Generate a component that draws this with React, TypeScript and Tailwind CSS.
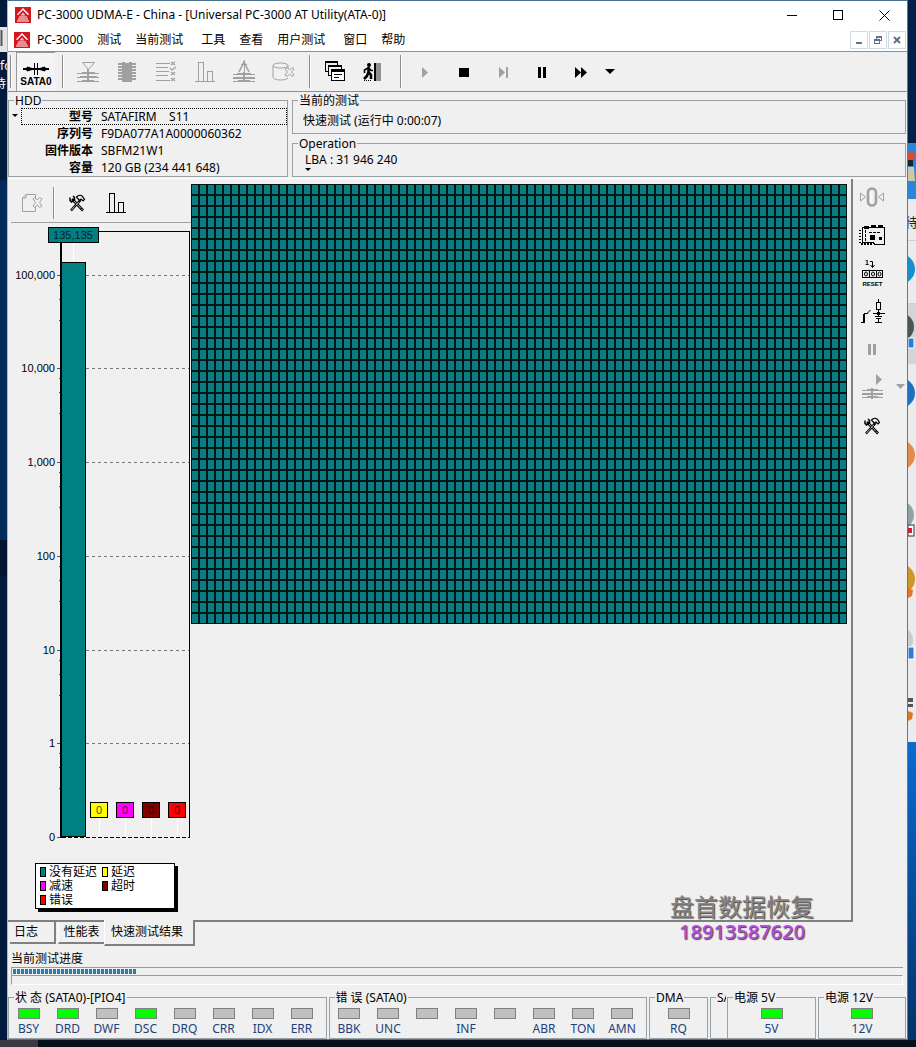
import type { ReactNode } from 'react';
import clsx from 'clsx';

const MENU = [
  { label: 'PC-3000' },
  { label: '测试' },
  { label: '当前测试', wide: true },
  { label: '工具' },
  { label: '查看' },
  { label: '用户测试', wide: true },
  { label: '窗口' },
  { label: '帮助' },
];

const DRIVE = [
  { label: '型号', value: 'SATAFIRM    S11' },
  { label: '序列号', value: 'F9DA077A1A0000060362' },
  { label: '固件版本', value: 'SBFM21W1' },
  { label: '容量', value: '120 GB (234 441 648)' },
];

const STATUS = [
  { label: 'BSY', on: true },
  { label: 'DRD', on: true },
  { label: 'DWF', on: false },
  { label: 'DSC', on: true },
  { label: 'DRQ', on: false },
  { label: 'CRR', on: false },
  { label: 'IDX', on: false },
  { label: 'ERR', on: false },
];

const ERRORS = ['BBK', 'UNC', '', 'INF', '', 'ABR', 'TON', 'AMN'];

const AXIS = [
  { label: '100,000', y: 275 },
  { label: '10,000', y: 368 },
  { label: '1,000', y: 462 },
  { label: '100', y: 556 },
  { label: '10', y: 650 },
  { label: '1', y: 743 },
];

const ZEROS = [
  { x: 90, fill: '#ffff00' },
  { x: 116, fill: '#ff00ff' },
  { x: 142, fill: '#800000' },
  { x: 168, fill: '#ff0000' },
];

const LEGEND = [
  { label: '没有延迟', color: 'bg-[#008080]' },
  { label: '延迟', color: 'bg-[#ffff00]' },
  { label: '减速', color: 'bg-[#ff00ff]' },
  { label: '超时', color: 'bg-[#800000]' },
  { label: '错误', color: 'bg-[#ff0000]' },
];

function Icon({ children, className }: { children: ReactNode; className?: string }) {
  return (
    <svg
      width="28"
      height="28"
      viewBox="0 0 28 28"
      fill="none"
      stroke="currentColor"
      strokeWidth="1"
      shapeRendering="crispEdges"
      aria-hidden="true"
      className={className}
    >
      {children}
    </svg>
  );
}

function LogoIcon() {
  return (
    <svg width="16" height="16" viewBox="0 0 16 16" aria-hidden="true" className="shrink-0">
      <rect width="16" height="16" fill="#d31820" />
      <path d="M2.500 7.800 8 2l5.500 5.800" fill="none" stroke="#fff" strokeWidth="1.300" />
      <path d="M8 5.500 5.500 8.600h5z" fill="#f6c4c6" />
      <path d="M4 10h8M3 12h10M2 14h12" stroke="#fff" strokeWidth="1.100" />
    </svg>
  );
}

function TransformerDownIcon() {
  return (
    <Icon>
      <path d="M8.500 4.500h12l-6 7z" shapeRendering="auto" />
      <path d="M14 11v13M3 15h22M3 19h22M3 23h22" strokeWidth="2" />
      <path d="M3 14.500h5M21 14.500h4M3 18.500h3M23 18.500h2M3 22.500h5M20 22.500h5" stroke="#f0f0f0" />
    </Icon>
  );
}

function ChipIcon() {
  return (
    <Icon>
      <rect x="9" y="4" width="10" height="20" fill="currentColor" stroke="none" />
      <path d="M7 5v18M21 5v18" strokeWidth="4" strokeDasharray="2 1" />
      <path d="M12 4.500h4" stroke="#f0f0f0" />
    </Icon>
  );
}

function CheckListIcon() {
  return (
    <Icon>
      <path d="M4 5.500h14M4 9.500h12M4 13.500h13M4 17.500h12M4 22.500h14" />
      <path
        d="m19 4 4 3m0-3-4 3M18 10l2 2 4-3M19 14l4 3m0-3-4 3M19 20l4 3m0-3-4 3"
        shapeRendering="auto"
        strokeWidth="1.200"
      />
    </Icon>
  );
}

function BarsIcon() {
  return (
    <Icon>
      <path d="M4 23.500h20M7.500 23V4.500h5V23M16.500 23v-9.500h5V23" />
    </Icon>
  );
}

function TransformerUpIcon() {
  return (
    <Icon>
      <path d="M9 14 14 4l5 10" shapeRendering="auto" strokeWidth="1.500" />
      <path d="M11 6.500h6M14.500 2v12" />
      <path d="M14 14v10M3 16h22M3 19.500h22M3 23h22" strokeWidth="2" />
      <path d="M3 15.500h4M21 15.500h4M3 22.500h5M20 22.500h5" stroke="#f0f0f0" />
    </Icon>
  );
}

function CylinderIcon() {
  return (
    <Icon>
      <g shapeRendering="auto">
        <ellipse cx="11.500" cy="7.500" rx="7.500" ry="2.500" />
        <path d="M4 7.500V19c0 1.500 3 3 7.500 3s6-.8 7.500-2M19 7.500V11" />
        <path d="m16 11 2-1.500 2.500 2.500 2.500-2.500 2 1.500-2.500 3 2.500 3-2 1.500-2.500-2.500-2.500 2.500-2-1.500 2.500-3z" />
      </g>
    </Icon>
  );
}

function WindowsIcon() {
  return (
    <Icon className="text-black">
      <path d="M4.500 3.500h12v10h-12z" fill="#f0f0f0" />
      <path d="M4 4h13" strokeWidth="2" />
      <path d="M7.500 7.500h13v10h-13z" fill="#f0f0f0" />
      <path d="M7 8h14" strokeWidth="2" />
      <path d="M10.500 11.500h13v11h-13z" fill="#fff" />
      <path d="M10 13h14" strokeWidth="2" />
      <path d="M13 16.500h8M13 19.500h5" />
    </Icon>
  );
}

function ExitIcon() {
  return (
    <Icon className="text-black">
      <rect x="14" y="5" width="2" height="18" fill="#000" stroke="none" />
      <rect x="16" y="5" width="5" height="18" fill="#909090" stroke="none" />
      <g shapeRendering="auto">
        <circle cx="9" cy="7" r="2" fill="#000" stroke="none" />
        <path d="M8.500 9v6M8.500 14l2.500 3v4M8.500 14 7 18l-3 3" strokeWidth="2.600" />
        <path d="m8 10-3.500 2v3M9 10l2 2.500h2" strokeWidth="1.600" />
      </g>
      <path d="M4 22.500h8" strokeDasharray="1 1" />
    </Icon>
  );
}

function ToolsIcon() {
  return (
    <Icon className="text-black">
      <g shapeRendering="auto">
        <path d="m9 10 11 11.500M8 21.500 17.500 11" strokeWidth="2.600" />
        <path d="m10 11 9.500 10M8.500 21 17 11.500" stroke="#f0f0f0" strokeWidth=".8" strokeDasharray="5 1" />
        <path d="M7 8.500v3l1.500 1.500 3-2V8.500L10 7" strokeWidth="1.500" />
        <path d="M13.500 8c2-2 4.500-2 6-.5l2 3-1.500 1.500-2-2-1.500 1.500z" fill="#f0f0f0" strokeWidth="1.200" />
      </g>
    </Icon>
  );
}

function DocumentIcon() {
  return (
    <Icon>
      <g shapeRendering="auto">
        <path d="M18.500 10V5.500H9L5.500 9v13.500h13V18" />
        <path d="M9 5.500V9H5.500" />
        <path d="m16 10 1.500-1.500L20 11l2.500-2.500L25 10l-2.500 3.500L25 17l-2.500 1.500L20 16l-2.500 2.500L16 17l2.500-3.500z" />
      </g>
    </Icon>
  );
}

function ZeroIcon() {
  return (
    <Icon>
      <g shapeRendering="auto">
        <path d="M2.500 9v8l5-4zM25.500 9v8l-5-4z" />
        <rect x="10" y="4.500" width="8" height="17" rx="4" strokeWidth="2.600" />
        <path d="M13 8v10" stroke="#fff" strokeWidth="1" />
      </g>
    </Icon>
  );
}

function BoardIcon() {
  return (
    <Icon className="text-black">
      <path d="M4.500 5.500h22v17h-10l-1-2h-11z" />
      <path d="M6 5h5M13 4h5M20 4h5" strokeWidth="3" />
      <path d="M26.500 6v16" />
      <path d="M2 8v14" strokeWidth="2" strokeDasharray="1 2" />
      <path d="M3 22h11" strokeWidth="2" strokeDasharray="2 1" />
      <path d="M11 10.500h12M7.500 8v12" strokeDasharray="3 1" />
      <rect x="12" y="13" width="5" height="5" fill="#000" stroke="none" />
      <rect x="21" y="15" width="3" height="3" fill="#000" stroke="none" />
    </Icon>
  );
}

function ResetIcon() {
  return (
    <svg width="28" height="32" viewBox="0 0 28 32" fill="none" stroke="#000" aria-hidden="true">
      <path d="M12 3.500h2.500v6M12.500 7l2 2.500 2-2.500" />
      <text x="7" y="7" fontSize="7" fontWeight="700" fill="#000" stroke="none" fontFamily="Liberation Sans, sans-serif">
        1
      </text>
      <path d="M4.500 12.500h20v7h-20zM11.500 12v8M18.500 12v8" shapeRendering="crispEdges" />
      <ellipse cx="8" cy="16" rx="1.500" ry="2" />
      <ellipse cx="15" cy="16" rx="1.500" ry="2" />
      <ellipse cx="21.500" cy="16" rx="1.500" ry="2" />
      <text x="14.500" y="28" fontSize="6" fontWeight="700" textAnchor="middle" fill="#000" stroke="none" fontFamily="Liberation Sans, sans-serif">
        RESET
      </text>
    </svg>
  );
}

function CircuitIcon() {
  return (
    <Icon className="text-black">
      <path d="M20.500 1v4M18.500 4.500h4v7h-4zM20.500 12v6M15 15.500h12M3 24.500h3v-9h4M5.500 16v9" />
      <path d="m9 15.500 3.500-3.500" shapeRendering="auto" />
      <path d="M17 18.500h7M18 20.500h5M20.500 20v5M17 24.500h7" />
      <rect x="19" y="14" width="3" height="3" fill="#000" stroke="none" />
    </Icon>
  );
}

function RunTransformerIcon() {
  return (
    <Icon>
      <path d="M18 0v11l6-5.500z" fill="currentColor" stroke="none" shapeRendering="auto" />
      <path d="M14 14v11M4 16h21M4 19.500h21M4 23h21" strokeWidth="2" />
      <path d="M4 15.500h5M20 15.500h5M4 22.500h5M20 22.500h5" stroke="#f0f0f0" />
    </Icon>
  );
}

function PauseIcon() {
  return (
    <Icon>
      <path d="M10 8h3v11h-3zM15 8h3v11h-3z" fill="currentColor" stroke="none" />
    </Icon>
  );
}

function Separator() {
  return <div className="my-[3px] w-[2px] self-stretch border-l border-[#8c8c8c] bg-white" />;
}

function ToolButton({ label, disabled, children }: { label: string; disabled?: boolean; children: ReactNode }) {
  return (
    <button
      type="button"
      aria-label={label}
      disabled={disabled}
      className={clsx('flex w-[39px] items-center justify-center', disabled ? 'text-[#a0a0a0]' : 'text-black')}
    >
      {children}
    </button>
  );
}

function SideButton({ label, disabled, children }: { label: string; disabled?: boolean; children: ReactNode }) {
  return (
    <button
      type="button"
      aria-label={label}
      disabled={disabled}
      className={clsx('flex h-[38px] w-8 items-center justify-center', disabled ? 'text-[#a0a0a0]' : 'text-black')}
    >
      {children}
    </button>
  );
}

function GroupBox({ title, className, children }: { title: ReactNode; className?: string; children?: ReactNode }) {
  return (
    <fieldset className={clsx('min-w-0 border border-[#98a1a8]', className)}>
      <legend className="ml-[5px] whitespace-nowrap px-px leading-[15px]">{title}</legend>
      {children}
    </fieldset>
  );
}

function Led({ label, on }: { label: string; on?: boolean }) {
  return (
    <div className="flex w-[39px] flex-col items-center">
      <span className={clsx('h-[11px] w-[22px] border border-[#808080]', on ? 'bg-[#00ff00]' : 'bg-[#c0c0c0]')} />
      <span className="mt-[2px] h-4 leading-4 text-[#1c427c]">{label}</span>
    </div>
  );
}

function DelayChart() {
  return (
    <svg
      width="183"
      height="632"
      viewBox="8 223 183 632"
      shapeRendering="crispEdges"
      fontFamily="Liberation Sans, Arial, sans-serif"
      fontSize="11"
      className="block"
      role="img"
      aria-label="快速测试结果"
    >
      <path d="M61 231.500h128.500V837" fill="none" stroke="#000" />
      {AXIS.map((tick) => (
        <g key={tick.label}>
          <path d={`M86 ${tick.y + 0.5}h103`} stroke="#777" strokeDasharray="3 3" />
          <path d={`M57 ${tick.y + 0.5}h4`} stroke="#555" />
          <path d={`M59 ${tick.y + 10.5}h2M59 ${tick.y + 24.5}h2M59 ${tick.y + 45.5}h2`} stroke="#555" />
          <text x="55" y={tick.y + 4} textAnchor="end" fill="#000">
            {tick.label}
          </text>
        </g>
      ))}
      <path d="M57 837.500h4" stroke="#555" />
      <path d="M62 837.500h128" stroke="#000" strokeDasharray="4 2" />
      <text x="55" y="841" textAnchor="end">
        0
      </text>
      <path d="M61 231v607" stroke="#000" strokeWidth="2" />
      <rect x="61.500" y="262.500" width="24" height="574" fill="#008080" stroke="#000" />
      <path d="M73.500 243v19" stroke="#fff" />
      <rect x="48.500" y="227.500" width="50" height="15" fill="#008080" stroke="#000" />
      <text x="73" y="239" textAnchor="middle" fill="#000" fillOpacity="0.75">
        135,135
      </text>
      {ZEROS.map((zero) => (
        <g key={zero.fill}>
          <path d={`M${zero.x + 9.5} 818v19`} stroke="#fff" />
          <rect x={zero.x + 0.5} y="802.500" width="17" height="15" fill={zero.fill} stroke="#000" />
          <text x={zero.x + 9} y="814" textAnchor="middle" fill="#000" fillOpacity="0.75">
            0
          </text>
        </g>
      ))}
    </svg>
  );
}

function SectorMap() {
  return (
    <svg width="656" height="440" shapeRendering="crispEdges" className="mt-[5px] block" role="img" aria-label="LBA">
      <defs>
        <pattern id="sector" width="8" height="11" patternUnits="userSpaceOnUse">
          <rect width="8" height="11" fill="#001414" />
          <rect x="1" y="1" width="6" height="9" fill="#087e82" />
        </pattern>
      </defs>
      <rect width="656" height="440" fill="url(#sector)" />
    </svg>
  );
}

function DesktopLeft() {
  return (
    <div className="relative w-[7px] shrink-0 overflow-hidden bg-[#021b3d]">
      <svg width="7" height="1047" viewBox="0 0 7 1047" className="absolute left-0 top-0" aria-hidden="true">
        <rect y="27" width="7" height="25" fill="#e4e4e4" />
        <path d="M1.500 30v16" stroke="#555" strokeWidth="2" />
        <rect y="180" width="7" height="370" fill="#032a58" />
        <rect y="540" width="7" height="36" fill="#02142e" />
        <text x="0" y="70" fontSize="12" fill="#fff" fontFamily="Noto Sans, sans-serif">
          fo
        </text>
        <text x="-6" y="88" fontSize="12" fill="#fff" fontFamily="Noto Sans CJK SC, sans-serif">
          待
        </text>
      </svg>
    </div>
  );
}

function DesktopRight() {
  return (
    <div className="relative w-2 shrink-0 overflow-hidden bg-[#04386f]">
      <svg width="8" height="1047" viewBox="0 0 8 1047" className="absolute left-0 top-0" aria-hidden="true">
        <defs>
          <linearGradient id="sky" x1="0" y1="0" x2="0" y2="1">
            <stop offset="0" stopColor="#0a6ad2" />
            <stop offset="1" stopColor="#033166" />
          </linearGradient>
        </defs>
        <rect width="8" height="143" fill="#03204a" />
        <rect y="143" width="8" height="56" fill="#2b86d8" />
        <circle cx="3" cy="156" r="4" fill="#dc4a36" />
        <rect y="160" width="5" height="6" fill="#222" />
        <path d="M0 167h6l1 14H0z" fill="#cfc8a8" />
        <rect y="199" width="8" height="543" fill="#ebebee" />
        <rect y="303" width="8" height="61" fill="#d4d4d8" />
        <path d="M0 240.500h8M0 303.500h8" stroke="#d0d0d4" />
        <text x="-3" y="227" fontSize="13" fill="#222" fontFamily="Noto Sans CJK SC, sans-serif">
          待
        </text>
        <circle cx="-8" cy="269" r="15" fill="#1590cc" />
        <circle cx="-8" cy="327" r="14" fill="#4b5654" />
        <rect y="338" width="6" height="10" fill="#2c7cd6" stroke="#fff" />
        <circle cx="-8" cy="393" r="15" fill="#1d72bf" />
        <circle cx="-8" cy="455" r="15" fill="#e38b4a" />
        <circle cx="-8" cy="515" r="14" fill="#8fa3a6" />
        <rect y="525" width="6" height="11" fill="#fff" stroke="#333" />
        <rect y="528" width="4" height="5" fill="#d02030" />
        <circle cx="-8" cy="579" r="15" fill="#cf962a" />
        <path d="M0 588l5 2-1 6-4 2z" fill="#e6742a" />
        <circle cx="-8" cy="640" r="13" fill="#c5cdd2" />
        <rect y="647" width="6" height="12" fill="#2c7cd6" stroke="#fff" />
        <path d="M0 698h5v4H0zM0 704h5v3H0z" fill="#555" />
        <path d="M0 711l5 2-1 6-4 2z" fill="#dd7a20" />
        <rect y="742" width="8" height="305" fill="url(#sky)" />
      </svg>
    </div>
  );
}

export default function App() {
  return (
    <div className="flex min-h-screen flex-col bg-[#04101a] font-['Noto_Sans','Noto_Sans_CJK_SC',sans-serif] text-[12px] text-black">
      <div className="flex flex-1">
        <DesktopLeft />

        <main className="relative flex min-w-0 flex-1 flex-col border border-b-[#2f8390] border-l-[#8fc4dc] border-r-[#2f8ba6] border-t-[#4b7391] bg-[#f0f0f0]">
          <header className="flex h-7 items-center bg-white pl-[7px]">
            <LogoIcon />
            <h1 className="ml-[6px] flex-1 truncate">
              PC-3000 UDMA-E - China - [Universal PC-3000 AT Utility(ATA-0)]
            </h1>
            <div className="flex text-black">
              <button type="button" aria-label="Minimize" className="flex h-7 w-[46px] items-center justify-center">
                <svg width="11" height="11" viewBox="0 0 11 11" stroke="currentColor" shapeRendering="crispEdges">
                  <path d="M0 5.500h10" />
                </svg>
              </button>
              <button type="button" aria-label="Maximize" className="flex h-7 w-[46px] items-center justify-center">
                <svg width="11" height="11" viewBox="0 0 11 11" fill="none" stroke="currentColor" shapeRendering="crispEdges">
                  <rect x="0.500" y="0.500" width="9" height="9" />
                </svg>
              </button>
              <button type="button" aria-label="Close" className="flex h-7 w-[46px] items-center justify-center">
                <svg width="11" height="11" viewBox="0 0 11 11" stroke="currentColor">
                  <path d="m.5.5 10 10m0-10-10 10" />
                </svg>
              </button>
            </div>
          </header>

          <nav className="flex h-[23px] items-center border-b border-[#8f8f8f] bg-white pl-[6px]">
            <LogoIcon />
            {MENU.map((item) => (
              <button key={item.label} type="button" className={clsx('whitespace-nowrap pl-[7px]', item.wide ? 'pr-[11px]' : 'pr-[7px]')}>
                {item.label}
              </button>
            ))}
            <div className="ml-auto flex gap-px pr-px text-[#5f7288]">
              <button type="button" aria-label="Minimize child" className="flex h-[18px] w-[18px] items-center justify-center border border-[#cfdbe4]">
                <svg width="10" height="10" viewBox="0 0 10 10" stroke="currentColor" strokeWidth="2">
                  <path d="M2 8h6" />
                </svg>
              </button>
              <button type="button" aria-label="Restore child" className="flex h-[18px] w-[18px] items-center justify-center border border-[#cfdbe4]">
                <svg width="10" height="10" viewBox="0 0 10 10" fill="none" stroke="currentColor" shapeRendering="crispEdges">
                  <path d="M3.500 4V1.500h5v4H7M3 2h6M1.500 4.500h5v4h-5zM1 5h6" />
                </svg>
              </button>
              <button type="button" aria-label="Close child" className="flex h-[18px] w-[18px] items-center justify-center border border-[#cfdbe4]">
                <svg width="10" height="10" viewBox="0 0 10 10" stroke="currentColor" strokeWidth="2">
                  <path d="m2 2 6 6m0-6L2 8" />
                </svg>
              </button>
            </div>
          </nav>

          <div className="flex h-10 border-b border-[#8f8f8f] pl-[2px]">
            <Separator />
            <button
              type="button"
              className="ml-1 flex w-[39px] flex-col items-center justify-center border-l border-t border-[#9a9a9a] bg-[#f4f4f4] pt-1 font-['Liberation_Sans',sans-serif] text-[10px] font-bold leading-[11px]"
            >
              <svg width="28" height="14" viewBox="0 0 28 14" stroke="#000" aria-hidden="true">
                <path d="M1 7h26" strokeWidth="2" shapeRendering="crispEdges" />
                <path d="M5 5v4l7-2zM23 5v4l-7-2z" fill="#000" />
                <path d="M12.500 1v12M15.500 1v12" shapeRendering="crispEdges" />
              </svg>
              SATA0
            </button>
            <div className="w-[7px]" />
            <Separator />
            <div className="ml-1 flex">
              <ToolButton label="Transformer" disabled><TransformerDownIcon /></ToolButton>
              <ToolButton label="Chip" disabled><ChipIcon /></ToolButton>
              <ToolButton label="Check list" disabled><CheckListIcon /></ToolButton>
              <ToolButton label="Chart" disabled><BarsIcon /></ToolButton>
              <ToolButton label="Translator" disabled><TransformerUpIcon /></ToolButton>
              <ToolButton label="Clear" disabled><CylinderIcon /></ToolButton>
            </div>
            <div className="w-[7px]" />
            <Separator />
            <div className="ml-1 flex">
              <ToolButton label="Windows"><WindowsIcon /></ToolButton>
              <ToolButton label="Exit"><ExitIcon /></ToolButton>
            </div>
            <div className="w-[7px]" />
            <Separator />
            <div className="ml-[3px] flex">
              <ToolButton label="Start" disabled>
                <Icon><path d="M11 9v11l6-5.500z" fill="currentColor" stroke="none" shapeRendering="auto" /></Icon>
              </ToolButton>
              <ToolButton label="Stop">
                <Icon><rect x="9" y="10" width="10" height="9" fill="currentColor" stroke="none" /></Icon>
              </ToolButton>
              <ToolButton label="Step" disabled>
                <Icon>
                  <path d="M10 9v11l6-5.500zM17 9h2v11h-2z" fill="currentColor" stroke="none" shapeRendering="auto" />
                </Icon>
              </ToolButton>
              <ToolButton label="Pause">
                <Icon><path d="M10 9h3v11h-3zM15 9h3v11h-3z" fill="currentColor" stroke="none" /></Icon>
              </ToolButton>
              <ToolButton label="Skip">
                <Icon>
                  <path d="M8 9v11l6-5.500zM14 9v11l6-5.500z" fill="currentColor" stroke="none" shapeRendering="auto" />
                </Icon>
              </ToolButton>
              <button type="button" aria-label="More" className="flex w-5 items-center justify-center">
                <svg width="10" height="6" viewBox="0 0 10 6"><path d="M0 0h10L5 5z" /></svg>
              </button>
            </div>
          </div>

          <div className="flex gap-1 pr-px pt-px">
            <GroupBox title="HDD" className="w-[280px] shrink-0">
              <dl className="relative pl-3">
                <span className="absolute left-[3px] top-[6px] border-x-[3px] border-t-[3px] border-x-transparent border-t-black" />
                {DRIVE.map((row, index) => (
                  <div
                    key={row.label}
                    className={clsx('flex h-[17px] items-center border border-dotted', index === 0 ? 'border-black' : 'border-transparent')}
                  >
                    <dt className="w-[71px] text-right font-bold">{row.label}</dt>
                    <dd className="ml-2 whitespace-pre">{row.value}</dd>
                  </div>
                ))}
              </dl>
            </GroupBox>
            <div className="flex min-w-0 flex-1 flex-col gap-[2px]">
              <GroupBox title="当前的测试">
                <p className="pl-[10px] leading-[25px]">快速测试 (运行中 0:00:07)</p>
              </GroupBox>
              <GroupBox title="Operation" className="flex-1">
                <p className="relative pl-3 leading-[18px]">
                  LBA : 31 946 240
                  <span className="absolute bottom-[-2px] left-3 border-x-[3px] border-t-[3px] border-x-transparent border-t-black" />
                </p>
              </GroupBox>
            </div>
          </div>

          <div className="mt-px flex flex-1 border-t border-white">
            <section className="flex min-w-0 flex-1 border-b-2 border-r-2 border-[#808080]">
              <div className="w-[183px] shrink-0">
                <div className="ml-[3px] flex h-11 items-center border-b border-[#a0a0a0] pt-[5px]">
                  <ToolButton label="Report" disabled><DocumentIcon /></ToolButton>
                  <div className="w-[3px]" />
                  <Separator />
                  <div className="ml-[2px] flex">
                    <ToolButton label="Settings"><ToolsIcon /></ToolButton>
                    <ToolButton label="Histogram"><BarsIcon /></ToolButton>
                  </div>
                </div>
                <DelayChart />
                <ul className="ml-[27px] mt-2 grid w-[140px] grid-cols-[62px_1fr] border border-black bg-white py-px pl-1 leading-[14px] shadow-[3px_3px_0_#000]">
                  {LEGEND.map((entry) => (
                    <li key={entry.label} className="flex items-center whitespace-nowrap">
                      <span className={clsx('mr-[3px] h-[10px] w-[6px] border border-black', entry.color)} />
                      {entry.label}
                    </li>
                  ))}
                </ul>
              </div>
              <div className="min-w-0 flex-1 overflow-hidden">
                <SectorMap />
              </div>
            </section>

            <aside className="w-[54px] shrink-0 pl-[3px]">
              <SideButton label="Zero" disabled><ZeroIcon /></SideButton>
              <SideButton label="Board"><BoardIcon /></SideButton>
              <SideButton label="Reset"><ResetIcon /></SideButton>
              <SideButton label="Power"><CircuitIcon /></SideButton>
              <SideButton label="Pause power" disabled><PauseIcon /></SideButton>
              <div className="flex">
                <SideButton label="Run" disabled><RunTransformerIcon /></SideButton>
                <button type="button" aria-label="Run options" disabled className="ml-auto mr-[2px] pb-1 text-[#a0a0a0]">
                  <svg width="9" height="5" viewBox="0 0 9 5" fill="currentColor"><path d="M0 0h9L4.500 5z" /></svg>
                </button>
              </div>
              <SideButton label="Utilities"><ToolsIcon /></SideButton>
            </aside>
          </div>

          <div className="relative flex h-6 items-start pl-[2px]" role="tablist">
            <button type="button" role="tab" className="h-[22px] w-[46px] border-b-2 border-r-2 border-[#808080] pr-3">
              日志
            </button>
            <button type="button" role="tab" className="ml-[2px] h-[22px] w-[46px] whitespace-nowrap border-b-2 border-l border-b-[#808080] border-l-white">
              性能表
            </button>
            <button
              type="button"
              role="tab"
              aria-selected="true"
              className="-mt-[2px] h-[26px] w-[91px] whitespace-nowrap border-b-2 border-l border-r-2 border-b-[#808080] border-l-white border-r-[#808080] bg-[#f0f0f0] pr-1"
            >
              快速测试结果
            </button>
          </div>

          <div className="pl-[3px] pr-[4px] pt-1">
            <p id="progress-label" className="leading-[17px]">当前测试进度</p>
            <div
              role="progressbar"
              aria-labelledby="progress-label"
              aria-valuenow={14}
              className="flex h-2 border-l border-t border-[#9a9a9a] py-px pl-px"
            >
              <div className="w-[123px] bg-[repeating-linear-gradient(90deg,#2d7ba8_0_3px,#e4ecf0_3px_4px)]" />
            </div>
            <div className="h-[10px] border border-b-white border-l-[#9a9a9a] border-r-white border-t-[#9a9a9a]" />
          </div>

          <footer className="mt-[5px] flex gap-[2px] pr-px">
            <GroupBox title="状 态 (SATA0)-[PIO4]" className="flex-1">
              <div className="flex pb-px pt-[3px]">
                {STATUS.map((led) => (
                  <Led key={led.label} label={led.label} on={led.on} />
                ))}
              </div>
            </GroupBox>
            <GroupBox title="错 误 (SATA0)" className="flex-1">
              <div className="flex pb-px pt-[3px]">
                {ERRORS.map((label, index) => (
                  <Led key={index} label={label} />
                ))}
              </div>
            </GroupBox>
            <GroupBox title="DMA" className="w-[59px]">
              <div className="flex justify-center pt-[3px]"><Led label="RQ" /></div>
            </GroupBox>
            <div className="flex">
              <GroupBox title={<span className="block w-[9px] overflow-hidden">SA</span>} className="w-[17px] border-r-0" />
              <GroupBox title="电源 5V" className="w-[89px]">
                <div className="flex justify-center pt-[3px]"><Led label="5V" on /></div>
              </GroupBox>
            </div>
            <GroupBox title="电源 12V" className="w-[88px]">
              <div className="flex justify-center pt-[3px]"><Led label="12V" on /></div>
            </GroupBox>
          </footer>

          <div className="pointer-events-none absolute bottom-[95px] right-[93px] text-center">
            <p className="text-[24px] leading-[26px] text-[#858585] [text-shadow:1px_1px_1px_#444]">盘首数据恢复</p>
            <p className="text-[20px] font-medium leading-6 text-[#b34ce0] [text-shadow:1px_1px_1px_#444]">18913587620</p>
          </div>
        </main>

        <DesktopRight />
      </div>
      <div className="h-[7px] shrink-0">
        <div className="h-full w-[38px] bg-[#3a3a44]" />
      </div>
    </div>
  );
}
